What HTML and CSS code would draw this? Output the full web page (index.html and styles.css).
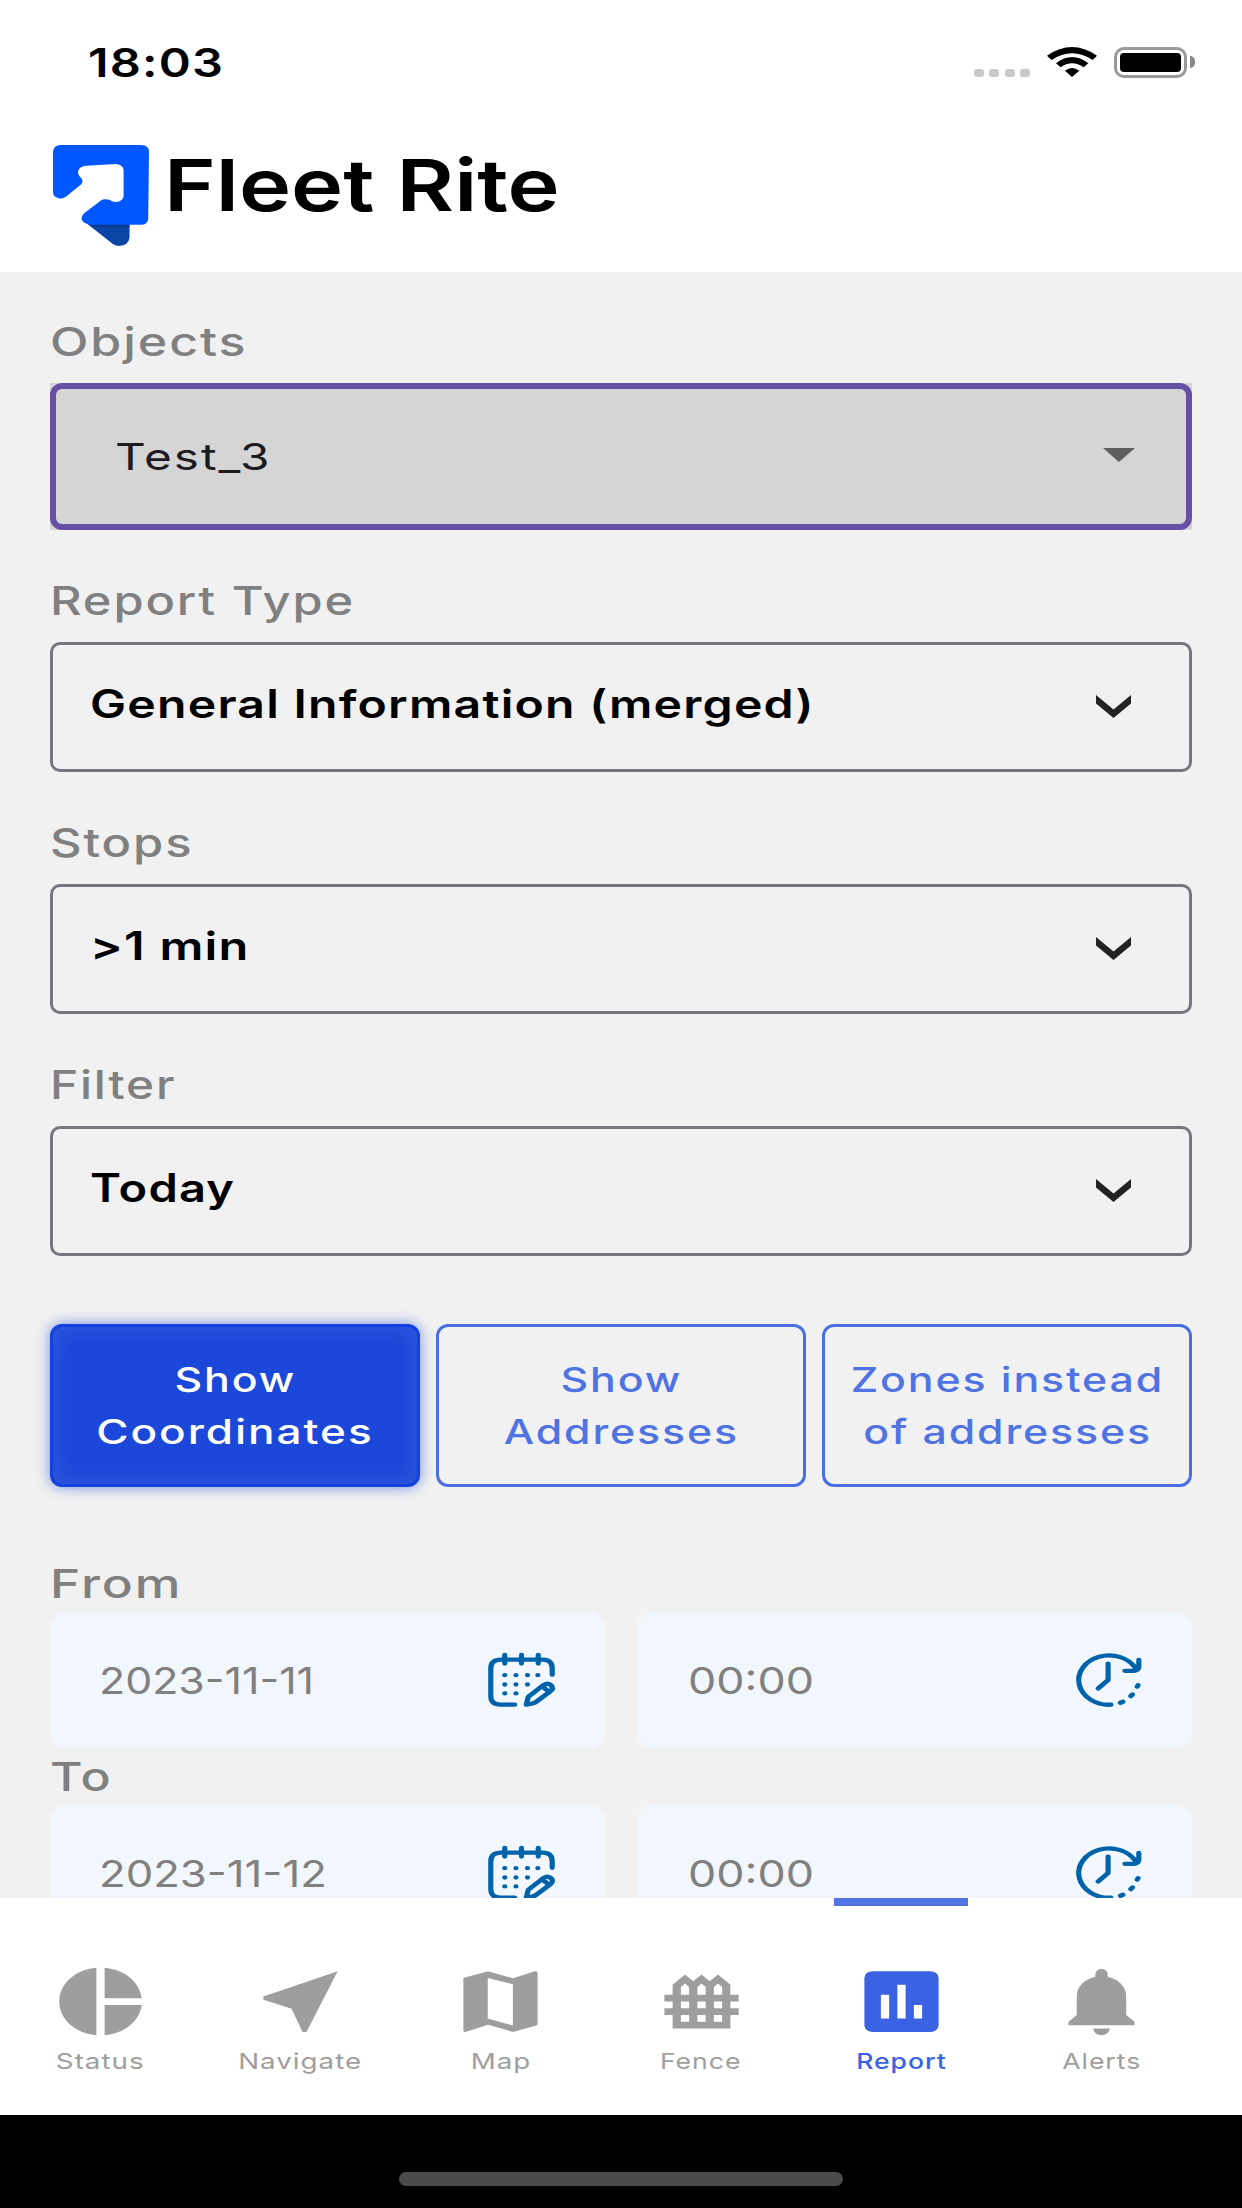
FILE: index.html
```html
<!DOCTYPE html>
<html lang="en">

<head>
    <meta charset="utf-8">
    <meta name="viewport" content="width=device-width, initial-scale=1.0">
    <title>Fleet Rite</title>
    <link rel="stylesheet" href="styles.css">
</head>

<body>
    <div class="statusbar">
        <span class="time">18:03</span>
        <div class="indicators">
            <div class="dots"><i></i><i></i><i></i><i></i></div>
            <svg class="wifi" viewBox="441 81 150 90" preserveAspectRatio="none">
                <path d="M441 107Q516 55 591 107L578 120Q516 80 455 120Z" />
                <path d="M468 130Q516 92 565 130L551 142Q516 118 482 142Z" />
                <path d="M495 152Q516 136 538 152L516 171Z" />
            </svg>
            <div class="battery"></div>
            <div class="battery-cap"></div>
        </div>
    </div>

    <header class="header">
        <svg class="logo" viewBox="134 436 242 303" preserveAspectRatio="none">
            <path fill="#0b46a6" d="M220 672H327V713Q325 738 300 739Q290 738 284 732Z" />
            <path fill="#083a8c" d="M224 675H327V683H234Z" />
            <path fill="#0057ff" d="M154 436H356Q376 437 376 456L374 657Q373 675 356 675H226Q206 670 206 655Q207 645 214 639L254 603Q262 596 276 600Q282 607 294 607Q312 603 312 588V512Q311 495 293 493L217 498Q198 500 197 519Q198 528 207 538Q211 545 206 553L168 590Q160 597 153 597Q134 594 134 577V456Q135 437 154 436Z" />
        </svg>
        <h1><span class="brand">Fleet Rite</span></h1>
    </header>

    <main class="form">
        <label class="label"><span class="objects">Objects</span></label>
        <div class="picker">
            <div class="picker-box">
                <span>Test_3</span>
                <svg class="triangle" viewBox="0 0 32 14"><path d="M0 0H32L16 14Z" /></svg>
            </div>
        </div>

        <label class="label"><span class="report-type">Report Type</span></label>
        <div class="select">
            <span class="general">General Information (merged)</span>
            <svg class="chevron" viewBox="0 0 88 68" preserveAspectRatio="none"><path d="M0 0L44 43L88 0V25L44 68L0 25Z" /></svg>
        </div>

        <label class="label"><span class="stops">Stops</span></label>
        <div class="select">
            <span class="minute">&gt;1 min</span>
            <svg class="chevron" viewBox="0 0 88 68" preserveAspectRatio="none"><path d="M0 0L44 43L88 0V25L44 68L0 25Z" /></svg>
        </div>

        <label class="label"><span class="filter">Filter</span></label>
        <div class="select">
            <span class="today">Today</span>
            <svg class="chevron" viewBox="0 0 88 68" preserveAspectRatio="none"><path d="M0 0L44 43L88 0V25L44 68L0 25Z" /></svg>
        </div>

        <div class="buttons">
            <button class="btn active"><span>Show</span><span class="coordinates">Coordinates</span></button>
            <button class="btn"><span>Show</span><span>Addresses</span></button>
            <button class="btn"><span>Zones instead</span><span>of addresses</span></button>
        </div>

        <label class="label first"><span class="from">From</span></label>
        <div class="row">
            <div class="field">
                <span class="date">2023-11-11</span>
                <svg class="icon" viewBox="1233 310 168 163" preserveAspectRatio="none"><use href="#calendar" /></svg>
            </div>
            <div class="field">
                <span class="hour">00:00</span>
                <svg class="icon" viewBox="1150 309 168 164" preserveAspectRatio="none"><use href="#clock" /></svg>
            </div>
        </div>

        <label class="label second"><span class="to">To</span></label>
        <div class="row">
            <div class="field">
                <span class="date-to">2023-11-12</span>
                <svg class="icon" viewBox="1233 310 168 163" preserveAspectRatio="none"><use href="#calendar" /></svg>
            </div>
            <div class="field">
                <span class="hour">00:00</span>
                <svg class="icon" viewBox="1150 309 168 164" preserveAspectRatio="none"><use href="#clock" /></svg>
            </div>
        </div>
    </main>

    <nav class="nav">
        <a class="tab">
            <svg viewBox="0 0 24 24" preserveAspectRatio="none"><path d="M11 2V22C5.900 21.500 2 17.200 2 12S5.900 2.500 11 2M13 2V11H22C21.500 6.200 17.800 2.500 13 2M13 13V22C17.700 21.500 21.500 17.800 22 13H13Z" /></svg>
            <span>Status</span>
        </a>
        <a class="tab">
            <svg viewBox="0 0 24 24" preserveAspectRatio="none"><path d="M21 3L3 10.530V11.500L9.840 14.160L12.500 21H13.460L21 3Z" /></svg>
            <span>Navigate</span>
        </a>
        <a class="tab">
            <svg viewBox="0 0 24 24" preserveAspectRatio="none"><path fill-rule="evenodd" d="M20.500 3L20.340 3.030L15 5.100L9 3L3.360 4.900C3.150 4.970 3 5.150 3 5.380V20.500A.5.5 0 0 0 3.500 21L3.660 20.970L9 18.900L15 21L20.640 19.100C20.850 19.030 21 18.850 21 18.620V3.500A.5.5 0 0 0 20.500 3M8.900 5L15 6.900V19.100L8.900 17Z" /></svg>
            <span>Map</span>
        </a>
        <a class="tab">
            <svg viewBox="0 0 24 24" preserveAspectRatio="none"><path fill-rule="evenodd" d="M5 20V16H3V14H5V12H3V10H5V7L8 4L10 6L12 4L14 6L16 4L19 7V10H21V12H19V14H21V16H19V20ZM7 10H9V7.700L8 6.700L7 7.700ZM11 10H13V7.700L12 6.700L11 7.700ZM15 10H17V7.700L16 6.700L15 7.700ZM7 12V14H9V12ZM11 12V14H13V12ZM15 12V14H17V12ZM7 16V18H9V16ZM11 16V18H13V16ZM15 16V18H17V16Z" /></svg>
            <span class="narrow">Fence</span>
        </a>
        <a class="tab selected">
            <svg viewBox="0 0 24 24" preserveAspectRatio="none"><path fill-rule="evenodd" d="M5 3H19A2 2 0 0 1 21 5V19A2 2 0 0 1 19 21H5A2 2 0 0 1 3 19V5A2 2 0 0 1 5 3ZM7 10V17H9V10ZM11 7V17H13V7ZM15 13V17H17V13Z" /></svg>
            <span class="narrow">Report</span>
        </a>
        <a class="tab">
            <svg viewBox="0 0 24 24" preserveAspectRatio="none"><path d="M14 20A2 2 0 0 1 10 20ZM12 2.400A1.500 1.500 0 0 1 13.500 3.900V4.700C16.200 5.400 18 7.700 18 10.500V16L20 18V19H4V18L6 16V10.500C6 7.700 7.800 5.400 10.500 4.700V3.900A1.500 1.500 0 0 1 12 2.400Z" /></svg>
            <span class="narrow">Alerts</span>
        </a>
    </nav>

    <footer class="homebar"><div></div></footer>

    <svg class="defs">
        <g id="calendar">
            <path class="line" d="M1300 466H1264Q1240 466 1240 440V356Q1240 330 1266 330H1370Q1394 330 1394 356V376M1275 316V342M1317 316V342M1359 316V342" />
            <path class="line" d="M1275 377h.1M1303 377h.1M1332 377h.1M1358 377h.1M1275 405h.1M1303 405h.1M1332 405h.1M1275 432h.1M1303 432h.1" />
            <path class="line" d="M1329 466L1334 442L1372 407Q1383 398 1392 408Q1398 417 1390 425L1352 459Q1344 464 1329 466ZM1368 410L1386 427" />
        </g>
        <g id="clock">
            <path class="line" d="M1240 466A76 75 0 1 1 1303 357M1275 363H1298Q1310 362 1310 350V330M1233 341V391L1208 417" />
            <path class="line" d="M1306 411L1308 407M1290 440L1294 435M1264 460L1270 457" />
        </g>
    </svg>
</body>

</html>
```
FILE: styles.css
```css
* {
    box-sizing: border-box;
}

body {
    margin: 0;
    width: 1242px;
    height: 2208px;
    overflow: hidden;
    display: flex;
    flex-direction: column;
    background: #fff;
    font-family: Inter, "Open Sans", sans-serif;
}

/* wide lettering */
span {
    display: inline-block;
    white-space: nowrap;
    transform: scaleX(1.2);
    transform-origin: left;
}

.statusbar {
    height: 124px;
    padding: 0 47px 0 88px;
    display: flex;
    align-items: center;
    justify-content: space-between;
}

.time {
    font-size: 40px;
    font-weight: 600;
    letter-spacing: 1px;
    transform: scaleX(1.215);
}

.indicators {
    display: flex;
    align-items: center;
}

.dots {
    display: flex;
    gap: 5.400px;
    margin: 22px 17px 0 0;
}

.dots i {
    width: 10px;
    height: 8px;
    border-radius: 3px;
    background: #c9c9c9;
}

.wifi {
    width: 50px;
    height: 30px;
    margin-right: 17px;
}

.battery {
    width: 73px;
    height: 31px;
    border: 3px solid #999;
    border-radius: 10px;
    background: #000;
    background-clip: content-box;
    padding: 3px;
}

.battery-cap {
    width: 5px;
    height: 12px;
    margin-left: 3px;
    background: #888;
    border-radius: 0 5px 5px 0;
}

.header {
    height: 148px;
    padding: 21px 53px 0;
    display: flex;
    align-items: flex-start;
}

.logo {
    width: 96px;
    height: 101px;
    margin-right: 15px;
}

.header h1 {
    margin: 0;
    font-size: 72px;
    line-height: 79px;
    font-weight: 600;
}

.brand {
    transform: scaleX(1.225);
}

.form {
    height: 1626px;
    flex: none;
    overflow: hidden;
    background: #f1f1f1;
    padding: 0 50px;
}

.label {
    display: block;
    margin: 42px 0 14px;
    height: 56px;
    font-size: 39px;
    line-height: 58px;
    font-weight: 500;
    letter-spacing: 1.500px;
    color: #808080;
}

.label:first-child {
    margin-top: 41px;
}

.label.first {
    margin: 69px 0 0;
    line-height: 56px;
}

.label.second {
    margin: 1px 0 0;
    line-height: 56px;
}

.objects {
    transform: scaleX(1.285);
}

.report-type {
    transform: scaleX(1.252);
}

.filter {
    transform: scaleX(1.225);
}

.stops {
    transform: scaleX(1.255);
}

.from {
    transform: scaleX(1.317);
}

.to {
    transform: scaleX(1.28);
}

.picker {
    height: 147px;
    background: #d5d5d5;
}

.picker-box {
    height: 147px;
    padding: 0 51px 0 59px;
    border: 6px solid #6750a4;
    border-radius: 12px;
    display: flex;
    align-items: center;
    justify-content: space-between;
    font-size: 37px;
    color: #1d1b1f;
}

.picker-box span {
    letter-spacing: 1.500px;
    transform: scaleX(1.29);
}

.triangle {
    width: 32px;
    height: 14px;
    margin-bottom: 3px;
    fill: #5f5f5f;
}

.select {
    height: 130px;
    padding: 0 58px 0 37px;
    border: 3px solid #79747e;
    border-radius: 10px;
    display: flex;
    align-items: center;
    justify-content: space-between;
    font-size: 39px;
    font-weight: 600;
    letter-spacing: 1px;
}

.select span {
    margin-bottom: 8px;
}

.select .general {
    transform: scaleX(1.235);
}

.select .minute {
    transform: scaleX(1.25);
}

.select .today {
    transform: scaleX(1.205);
}

.chevron {
    width: 35px;
    height: 23px;
    margin-bottom: 1px;
    fill: #222;
}

.buttons {
    display: grid;
    grid-template-columns: repeat(3, 1fr);
    gap: 16.500px;
    margin-top: 68px;
}

.btn {
    display: flex;
    flex-direction: column;
    align-items: center;
    justify-content: center;
    height: 163px;
    padding: 0;
    border: 3px solid #4a6fe3;
    border-radius: 12px;
    background: none;
    color: #4f73e2;
    font: 500 34px/52px Inter, sans-serif;
    letter-spacing: 1.500px;
}

.btn span,
.tab span {
    transform: scaleX(1.26);
    transform-origin: center;
}

.btn .coordinates {
    transform: scaleX(1.297);
}

.btn.active {
    color: #fff;
    border-color: #1340de;
    background: #1c48da;
    box-shadow: 0 0 14px rgba(28, 72, 218, .6), inset 0 0 22px rgba(255, 255, 255, .1);
}

.row {
    display: grid;
    grid-template-columns: 1fr 1fr;
    gap: 32px;
}

.field {
    height: 136px;
    padding: 0 50px 0 49px;
    display: flex;
    align-items: center;
    justify-content: space-between;
    border-radius: 16px;
    background: #f2f7fe;
    font-size: 37px;
    color: #808080;
}

.date {
    transform: scaleX(1.159);
}

.date-to {
    transform: scaleX(1.18);
}

.hour {
    margin-left: 2px;
    transform: scaleX(1.21);
}

.icon {
    width: 67px;
    height: 54px;
    overflow: visible;
}

.line {
    fill: none;
    stroke: #0062a8;
    stroke-width: 13;
    stroke-linecap: round;
    stroke-linejoin: round;
}

.nav {
    height: 217px;
    flex: none;
    display: grid;
    grid-template-columns: repeat(6, 1fr);
    padding-right: 40px;
    background: #fff;
}

.tab {
    display: flex;
    flex-direction: column;
    align-items: center;
    padding-top: 63px;
    font-size: 22px;
    line-height: 30px;
    letter-spacing: 0.800px;
    color: #9e9e9e;
    fill: #9e9e9e;
}

.tab svg {
    width: 99px;
    height: 81px;
    margin-bottom: 4px;
}

.tab .narrow {
    transform: scaleX(1.21);
}

.tab.selected {
    font-weight: 500;
    color: #3a62e2;
    fill: #3a62e2;
    background: linear-gradient(#5475e6, #5475e6) top / 134px 8px no-repeat;
}

.homebar {
    flex: 1;
    background: #000;
    display: flex;
    justify-content: center;
    padding-top: 57px;
}

.homebar div {
    width: 444px;
    height: 14px;
    border-radius: 7px;
    background: #4b4b4b;
}

.defs {
    display: none;
}
```
